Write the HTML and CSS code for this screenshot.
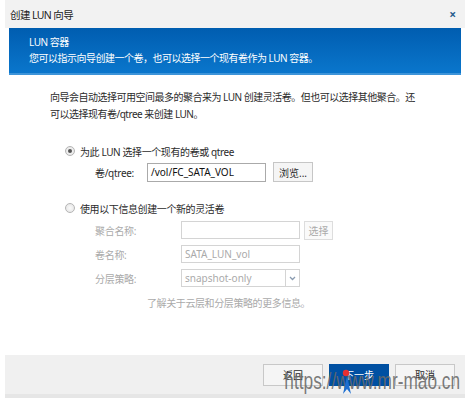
FILE: index.html
```html
<!DOCTYPE html>
<html lang="zh">
<head>
<meta charset="utf-8">
<link rel="stylesheet" href="styles.css">
</head>
<body>
<div class="dialog">
  <div class="titlebar">
    <span class="title">创建 LUN 向导</span>
    <span class="close">×</span>
  </div>
  <div class="banner">
    <div class="banner-title">LUN 容器</div>
    <div class="banner-sub">您可以指示向导创建一个卷，也可以选择一个现有卷作为 LUN 容器。</div>
  </div>
  <div class="content">
    <p class="intro">向导会自动选择可用空间最多的聚合来为 LUN 创建灵活卷。但也可以选择其他聚合。还可以选择现有卷/qtree 来创建 LUN。</p>
    <div class="option">
      <span class="radio checked"></span><span class="otext">为此 LUN 选择一个现有的卷或 qtree</span>
    </div>
    <div class="row r-vol">
      <span class="lbl">卷/qtree:</span>
      <span class="field f-vol">/vol/FC_SATA_VOL</span>
      <span class="btn b-browse">浏览...</span>
    </div>
    <div class="option opt2">
      <span class="radio"></span><span class="otext">使用以下信息创建一个新的灵活卷</span>
    </div>
    <div class="grid">
      <span class="lbl dis">聚合名称:</span>
      <div class="cell"><span class="field dis-f"></span><span class="btn dis-b">选择</span></div>
      <span class="lbl dis">卷名称:</span>
      <div class="cell"><span class="field dis-f">SATA_LUN_vol</span></div>
      <span class="lbl dis">分层策略:</span>
      <div class="cell"><span class="field dis-f sel">snapshot-only<span class="arrow"><svg width="7" height="5" viewBox="0 0 7 5"><path d="M1 1 L3.5 3.5 L6 1" fill="none" stroke="#8a9bb0" stroke-width="1.3"/></svg></span></span></div>
      <span></span>
      <span class="more">了解关于云层和分层策略的更多信息。</span>
    </div>
  </div>
  <div class="footer">
    <span class="fbtn">返回</span>
    <span class="fbtn primary">下一步</span>
    <span class="fbtn">取消</span>
    <span class="watermark">https://www.mr-mao.cn</span>
    <svg class="wm-logo" width="16" height="28" viewBox="0 0 16 28">
      <path d="M8 8 L12 26 L8 21 L4 26 Z" fill="#1e6fd0"/>
      <circle cx="7" cy="5" r="3.2" fill="#e83030"/>
    </svg>
  </div>
  <div class="bottom"></div>
</div>
</body>
</html>
```
FILE: styles.css
```css
* { box-sizing: border-box; }
html, body { margin: 0; padding: 0; background: #fff; }
body {
  font-family: "Noto Sans", "Noto Sans CJK SC", sans-serif;
  font-size: 10px;
  color: #2b2b2b;
  width: 465px;
  height: 398px;
  overflow: hidden;
}
.dialog {
  margin-left: 5px;
  width: 460px;
  height: 398px;
  display: flex;
  flex-direction: column;
  position: relative;
}
.titlebar {
  height: 28px;
  background: #f2f2f2;
  display: flex;
  align-items: center;
  justify-content: space-between;
  padding: 0 9px 0 5px;
  flex-shrink: 0;
}
.title { font-size: 10.5px; color: #222; letter-spacing: -0.6px; }
.close { color: #2a5c8e; font-size: 12px; font-weight: bold; }
.banner {
  margin-left: 4px;
  width: 452px;
  height: 47px;
  background: linear-gradient(#005db0, #0a76cc);
  border-bottom: 2px solid #3d94d9;
  color: #fff;
  padding: 6px 0 0 20px;
  line-height: 16px;
  flex-shrink: 0;
  letter-spacing: -0.5px;
}
.content {
  flex: 1;
  padding: 14px 0 0 45px;
}
.intro {
  margin: 0;
  width: 370px;
  line-height: 17px;
  letter-spacing: -0.5px;
}
.option {
  display: flex;
  align-items: center;
  margin-top: 20px;
  margin-left: 15px;
  height: 16px;
}
.otext { letter-spacing: -0.4px; }
.opt2 { margin-top: 18px; }
.radio {
  width: 10px;
  height: 10px;
  border-radius: 50%;
  border: 1px solid #b5b5b5;
  background: radial-gradient(#fafafa, #e2e2e2);
  margin-right: 5px;
  position: relative;
}
.radio.checked::after {
  content: "";
  position: absolute;
  left: 2px; top: 2px;
  width: 4px; height: 4px;
  border-radius: 50%;
  background: #555;
}
.row {
  display: flex;
  align-items: center;
  margin-left: 45px;
  margin-top: 3px;
  height: 20px;
}
.r-vol .lbl { width: 52px; }
.field {
  display: flex;
  align-items: center;
  border: 1px solid #aaa;
  height: 19px;
  width: 119px;
  padding-left: 3px;
  background: #fff;
  white-space: nowrap;
}
.f-vol { color: #111; }
.btn {
  display: flex;
  align-items: center;
  justify-content: center;
  border: 1px solid #c6c6c6;
  background: #f5f5f5;
  height: 20px;
  margin-left: 7px;
  white-space: nowrap;
}
.b-browse { width: 40px; }
.grid {
  display: grid;
  grid-template-columns: 86px auto;
  grid-auto-rows: 18px;
  row-gap: 6px;
  margin-left: 45px;
  margin-top: 5px;
  align-items: center;
}
.lbl { white-space: nowrap; letter-spacing: -0.3px; }
.lbl.dis { color: #aaa; }
.cell { display: flex; align-items: center; height: 18px; }
.dis-f { border-color: #d4d4d4; color: #aaa; height: 18px; }
.dis-b { border-color: #ddd; background: #fafafa; color: #aaa; height: 19px; margin-left: 4px; width: 29px; }
.sel { position: relative; }
.arrow {
  position: absolute;
  right: 0; top: 0;
  width: 14px; height: 16px;
  border-left: 1px solid #d4d4d4;
  display: flex; align-items: center; justify-content: center;
}
.more { color: #aaa; margin-left: -34px; white-space: nowrap; letter-spacing: -0.4px; }
.footer {
  height: 39px;
  background: #f0f0f0;
  display: flex;
  align-items: center;
  justify-content: flex-end;
  padding-right: 10px;
  gap: 6px;
  position: relative;
  flex-shrink: 0;
}
.fbtn {
  width: 60px;
  height: 22px;
  border: 1px solid #c8c8c8;
  background: #f5f5f5;
  display: flex;
  align-items: center;
  justify-content: center;
}
.fbtn.primary {
  background: #0050a2;
  border-color: #0050a2;
  color: #fff;
}
.watermark {
  position: absolute;
  right: 5px;
  bottom: 0px;
  font-family: "Liberation Sans", sans-serif;
  font-size: 24px;
  line-height: 26px;
  color: rgba(105,105,105,0.88);
  transform: scaleX(0.72);
  transform-origin: right bottom;
  white-space: nowrap;
  pointer-events: none;
}
.wm-logo {
  position: absolute;
  left: 334px;
  top: 13px;
}
.bottom { height: 4px; background: #e6e6e6; flex-shrink: 0; }
```
